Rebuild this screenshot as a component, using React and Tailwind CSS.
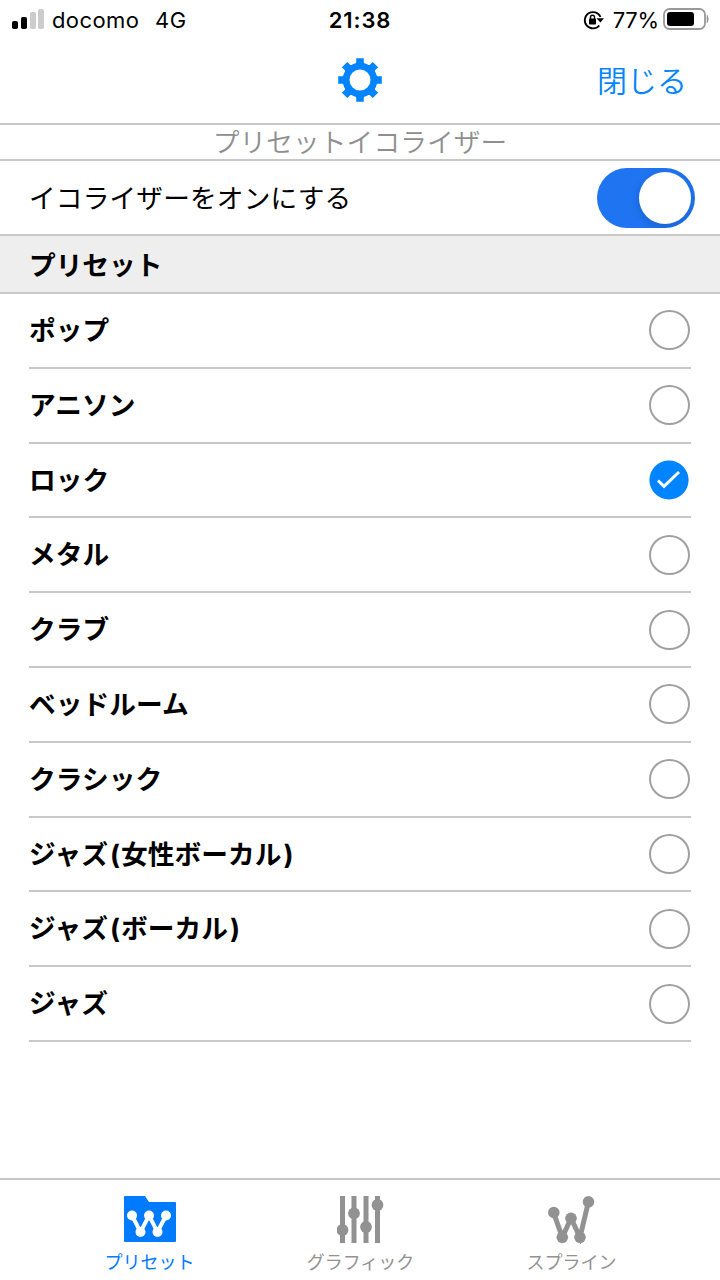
import React, { useState } from 'react';

const presets = [
  'ポップ',
  'アニソン',
  'ロック',
  'メタル',
  'クラブ',
  'ベッドルーム',
  'クラシック',
  'ジャズ(女性ボーカル)',
  'ジャズ(ボーカル)',
  'ジャズ',
];

function StatusBar() {
  return (
    <div className="grid h-10 grid-cols-3 items-center font-['Inter',sans-serif] text-[22px] leading-none text-black">
      <div className="flex items-center pl-3">
        <svg className="-mt-0.5" width="32" height="20" viewBox="0 0 32 20">
          <rect x="0" y="12" width="6" height="8" rx="1.8" fill="#000" />
          <rect x="9" y="8" width="6" height="12" rx="1.8" fill="#000" />
          <rect x="18" y="3" width="6" height="17" rx="1.8" fill="#ccc" />
          <rect x="26" y="0" width="6" height="20" rx="1.8" fill="#ccc" />
        </svg>
        <span className="ml-2 w-[103px] whitespace-nowrap tracking-[0.4px]">docomo</span>
        <span className="whitespace-nowrap tracking-[0.5px]">4G</span>
      </div>
      <span className="text-center font-semibold tracking-[0.9px]">21:38</span>
      <div className="flex items-center justify-end pr-2.5">
        <svg width="22" height="20" viewBox="0 0 22 20" fill="none" stroke="#000">
          <path d="M16.3 15.5 A8.2 8.2 0 1 1 17.5 7" strokeWidth="1.8" />
          <path d="M13.5 8.2 H21 L17.4 12.4 Z" fill="#000" stroke="none" />
          <rect x="6" y="8.6" width="7" height="6" rx="0.8" fill="#000" stroke="none" />
          <path d="M7.5 9 V7.2 a2 2 0 0 1 4 0 V9" strokeWidth="1.4" />
        </svg>
        <span className="ml-2 tracking-[-0.2px]">77%</span>
        <svg className="-mt-0.5 ml-1" width="47" height="22" viewBox="0 0 47 22">
          <rect x="1" y="1" width="41" height="20" rx="5.5" fill="none" stroke="#999" strokeWidth="1.8" />
          <rect x="4" y="4" width="27" height="14" rx="3" fill="#000" />
          <path d="M44.2 7.5 q2 3.5 0 7 z" fill="#999" stroke="#999" />
        </svg>
      </div>
    </div>
  );
}

function GearIcon() {
  return (
    <svg width="44" height="44" viewBox="-22 -22 44 44">
      <circle r="13.9" fill="none" stroke="#0084ff" strokeWidth="6.8" />
      {[0, 45, 90, 135, 180, 225, 270, 315].map((angle) => (
        <path key={angle} d="M-6.2 -14 L-3.8 -17.3 V-21.8 H3.8 V-17.3 L6.2 -14 Z" fill="#0084ff" transform={`rotate(${angle})`} />
      ))}
    </svg>
  );
}

function PresetIcon() {
  return (
    <svg width="52" height="46" viewBox="0 0 52 46">
      <path d="M1 0 H21 L25 6 H51 Q52 6 52 7 V45 Q52 46 51 46 H1 Q0 46 0 45 V1 Q0 0 1 0 Z" fill="#007aff" />
      <path d="M8 19.5 L16.5 36 L25 19.5 L33.5 36 L42 19.5" fill="none" stroke="#fff" strokeWidth="4" />
      <g fill="#fff">
        <circle cx="8" cy="19.5" r="5" />
        <circle cx="25" cy="19.5" r="5" />
        <circle cx="42" cy="19.5" r="5" />
        <circle cx="16.5" cy="36" r="5" />
        <circle cx="33.5" cy="36" r="5" />
      </g>
    </svg>
  );
}

function GraphicIcon() {
  return (
    <svg width="48" height="48" viewBox="0 0 48 48" fill="#929292">
      <path d="M3 0 H8 V47 H3 Z M14.5 0 H19.5 V47 H14.5 Z M26.5 0 H31.5 V47 H26.5 Z M38 0 H43 V47 H38 Z" />
      <circle cx="5.5" cy="34" r="5.9" />
      <circle cx="17" cy="17.3" r="5.9" />
      <circle cx="29" cy="31" r="5.9" />
      <circle cx="40.5" cy="9" r="5.9" />
    </svg>
  );
}

function SplineIcon() {
  return (
    <svg width="47" height="48" viewBox="0 0 47 48" fill="#929292">
      <path d="M5.5 16.5 L14.3 41.3 L23 22.3 L32 41.3 L40.5 5.5" fill="none" stroke="#929292" strokeWidth="5" />
      <circle cx="5.8" cy="16.5" r="5.8" />
      <circle cx="14.3" cy="41.3" r="5.8" />
      <circle cx="23" cy="22.3" r="5.8" />
      <circle cx="32" cy="41.3" r="5.8" />
      <circle cx="40.5" cy="5.8" r="5.8" />
    </svg>
  );
}

// parentheses get a little more room than the kana around them
function PresetName({ name }) {
  return (
    <span className="font-['Inter','Noto_Sans_CJK_JP',sans-serif] tracking-[0.05px]">
      {name.split(/([()])/).map((part, i) =>
        part === '(' || part === ')' ? (
          <span key={i} className="pr-px pl-[2px]">{part}</span>
        ) : (
          part
        )
      )}
    </span>
  );
}

const tabs = [
  { label: 'プリセット', Icon: PresetIcon },
  { label: 'グラフィック', Icon: GraphicIcon },
  { label: 'スプライン', Icon: SplineIcon },
];

export default function App() {
  const [enabled, setEnabled] = useState(true);
  const [selected, setSelected] = useState('ロック');

  return (
    <div className="flex h-[1280px] w-[720px] flex-col overflow-hidden bg-white font-['Noto_Sans_CJK_JP',sans-serif] text-[26.7px] leading-none text-black">
      <StatusBar />

      {/* Header */}
      <header className="grid h-[85px] grid-cols-3 items-center border-b-2 border-[#c8c8c8]">
        <div />
        <button className="mb-1 justify-self-center">
          <GearIcon />
        </button>
        <button className="mr-[33px] mb-1.5 justify-self-end text-[30px] font-[350] text-[#0084ff]">閉じる</button>
      </header>
      <h1 className="flex h-9 items-center justify-center border-b-2 border-[#c8c8c8] pb-0.5 font-[350] tracking-[0.1px] text-[#8e8e8e]">
        プリセットイコライザー
      </h1>

      {/* Equalizer switch */}
      <div className="flex h-[75px] items-center justify-between border-b-2 border-[#c8c8c8] pr-[25px] pl-[29px]">
        <span className="tracking-[0.15px]">イコライザーをオンにする</span>
        <button
          role="switch"
          aria-checked={enabled}
          onClick={() => setEnabled(!enabled)}
          className={`flex h-[60px] w-[98px] items-center overflow-hidden rounded-full px-1 ${enabled ? 'justify-end bg-[#1f74f2]' : 'bg-[#e5e5e5]'}`}
        >
          <span className="size-[52px] rounded-full bg-white shadow-[0_3px_10px_rgba(0,0,0,0.16)]" />
        </button>
      </div>

      <h2 className="flex h-[58px] items-center border-b-2 border-[#c8c8c8] bg-[#eee] pl-[29px] font-bold">
        プリセット
      </h2>

      {/* Preset list */}
      <ul className="flex-1 px-[29px]">
        {presets.map((name) => (
          <li key={name} className="h-[74.8px] border-b-2 border-[#c8c8c8]">
            <button onClick={() => setSelected(name)} className="flex h-full w-full items-center justify-between font-bold">
              <PresetName name={name} />
              {selected === name ? (
                <svg className="mr-0.5" width="40" height="40" viewBox="0 0 40 40">
                  <circle cx="20" cy="20" r="19.6" fill="#0084ff" />
                  <path d="M9 20.5 L15 26.3 L30 12" fill="none" stroke="#fff" strokeWidth="3" />
                </svg>
              ) : (
                <span className="mr-px h-10 w-[41px] rounded-[50%] border-2 border-[#a0a0a0]" />
              )}
            </button>
          </li>
        ))}
      </ul>

      {/* Tab bar */}
      <nav className="flex h-[102px] justify-center border-t-2 border-[#c8c8c8] pt-4 pl-px">
        {tabs.map(({ label, Icon }, i) => (
          <button
            key={label}
            className={`flex w-[211px] flex-col items-center ${i === 0 ? 'text-[#007aff]' : 'text-[#929292]'}`}
          >
            <span className="flex h-12 items-start">
              <Icon />
            </span>
            <span className="mt-2 text-[18px]">{label}</span>
          </button>
        ))}
      </nav>
    </div>
  );
}
